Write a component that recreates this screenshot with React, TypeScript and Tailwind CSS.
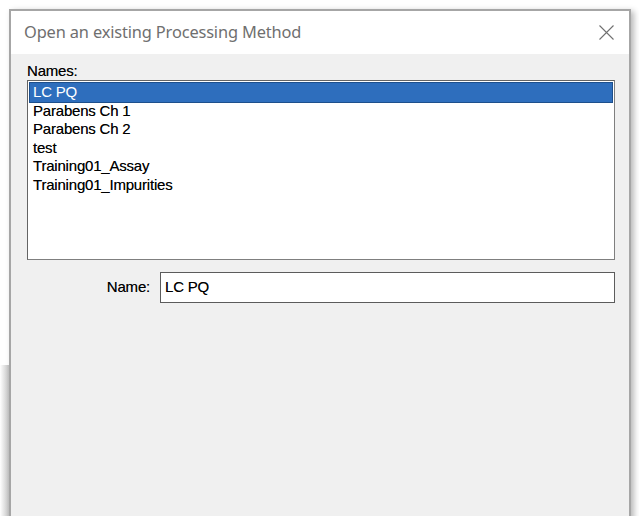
// ─── Data ────────────────────────────────────────────────────────────────────

const methods = [
  "LC PQ",
  "Parabens Ch 1",
  "Parabens Ch 2",
  "test",
  "Training01_Assay",
  "Training01_Impurities",
];

const selected = "LC PQ";

// ─── Dialog ──────────────────────────────────────────────────────────────────

const CloseGlyph = () => (
  <svg width="15" height="15" viewBox="0 0 15 15" className="text-[#707070]">
    <path d="M0.5 0.5 L14.5 14.5 M14.5 0.5 L0.5 14.5" stroke="currentColor" strokeWidth="1.1" fill="none" />
  </svg>
);

const OpenMethodDialog = () => (
  <div className="relative w-[639px] h-[516px] bg-white overflow-hidden">
    {/* window behind, peeking out at the left edge */}
    <div className="absolute left-0 top-[365px] bottom-0 w-[10px] bg-gradient-to-r from-white to-[#bdbdbd]" />

    <div className="relative ml-[9px] mt-[9px] w-[622px] h-[520px] flex flex-col border-2 border-[#a6a6a6] shadow-[3px_2px_6px_rgba(0,0,0,0.28)]">
      {/* Title bar */}
      <div className="h-[43px] bg-white flex items-center justify-between pl-[13px] pr-[15px]">
        <span className="text-[16.4px] text-[#6f6f6f] font-['Noto_Sans',sans-serif] tracking-[-0.15px]">
          Open an existing Processing Method
        </span>
        <CloseGlyph />
      </div>

      {/* Body */}
      <div className="flex-1 bg-[#f0f0f0] pl-[16px] pr-[14px] pt-[7px] font-['Liberation_Sans',Arial,sans-serif] text-[15px] tracking-[-0.2px] text-black [text-shadow:0_0_0.5px_rgba(0,0,0,0.55)]">
        <div className="h-[19px] leading-[19px]">Names:</div>

        <div className="h-[180px] bg-white border border-[#7f7f7f] border-t-[#646464] border-l-[#646464] p-[2px]">
          {methods.map((m) => (
            <div
              key={m}
              className={`h-[18.6px] leading-[18.6px] pl-[3px] ${
                m === selected
                  ? "bg-[#2e6ebd] text-white outline outline-1 outline-[#1d4f8c] [text-shadow:none]"
                  : ""
              }`}
            >
              {m}
            </div>
          ))}
        </div>

        <div className="flex items-center mt-[12px]">
          <span className="w-[133px] pr-[10px] text-right">Name:</span>
          <div className="flex-1 h-[31px] bg-white border border-[#5c5c5c] flex items-center pl-[4px]">
            LC PQ
          </div>
        </div>
      </div>
    </div>
  </div>
);

export default function App() {
  return <OpenMethodDialog />;
}
